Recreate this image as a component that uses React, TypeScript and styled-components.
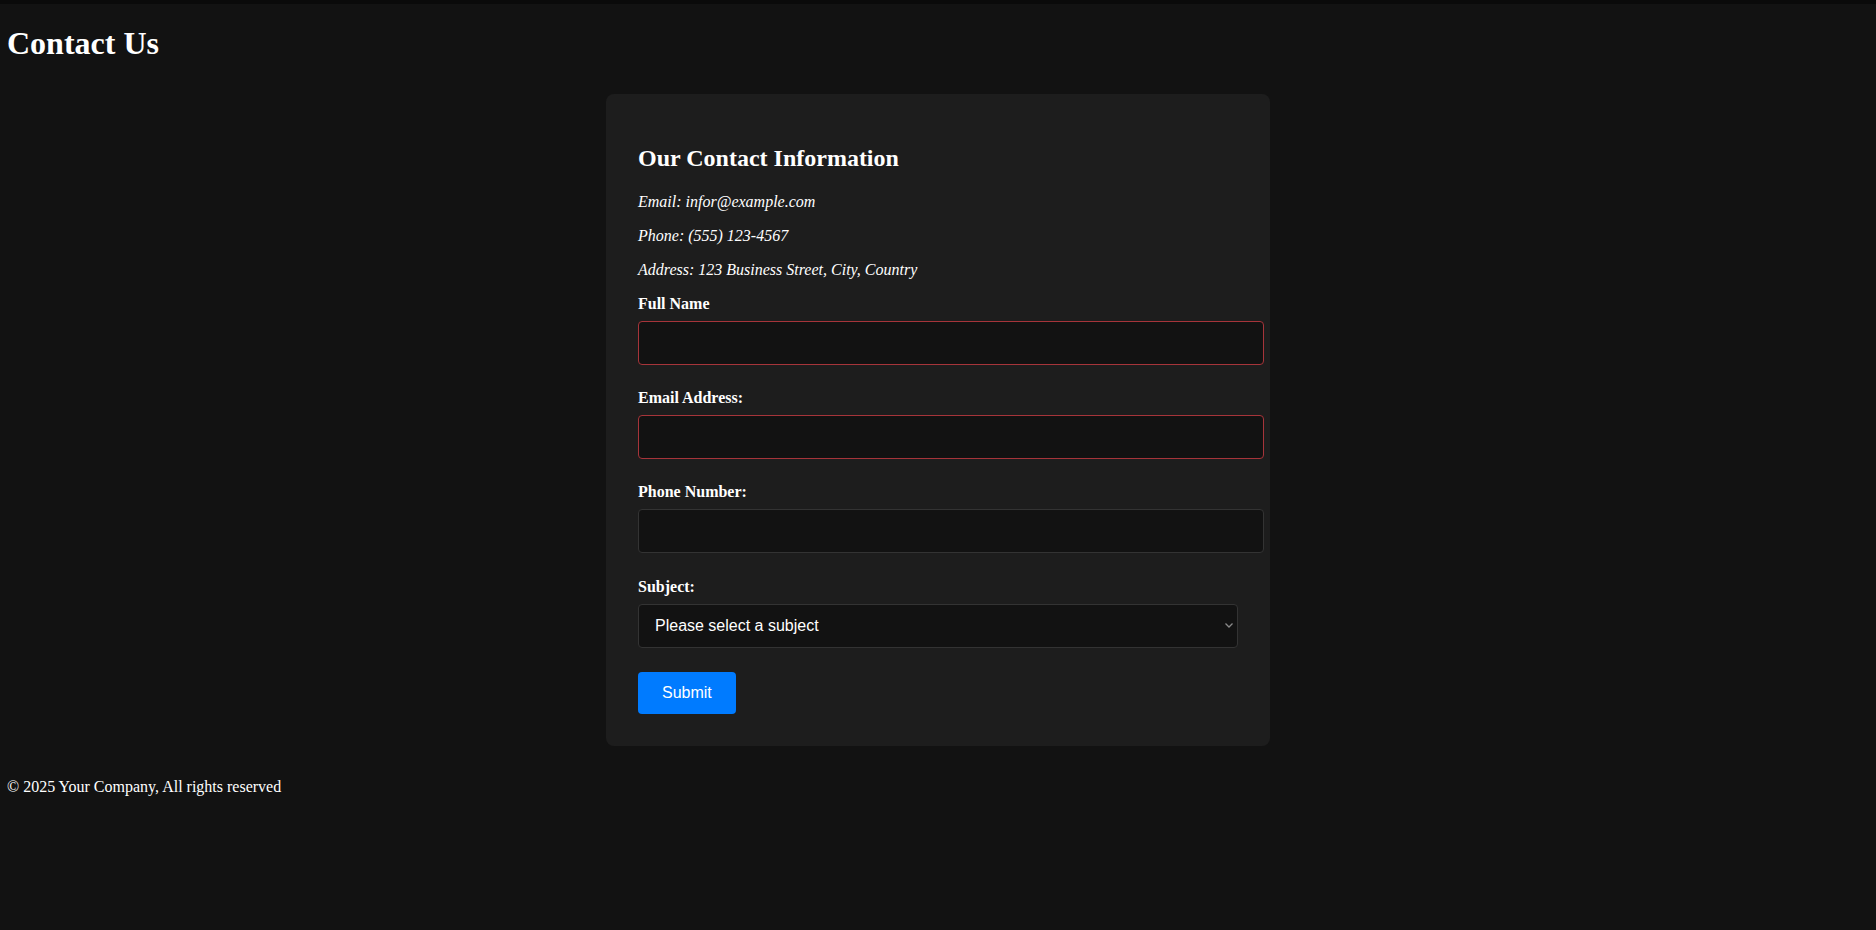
import React from "react";
import styled, { createGlobalStyle } from "styled-components";

const GlobalStyle = createGlobalStyle`
  html, body {
    margin: 0;
    padding: 0;
    background: #121212;
    color: #ffffff;
    font-family: "Liberation Serif", "Times New Roman", serif;
    font-size: 16px;
  }
`;

const Page = styled.div`
  min-height: 930px;
  background: #121212;
`;

const TopStrip = styled.div`
  height: 4px;
  background: #0a0a0a;
`;

const Main = styled.main`
  padding: 0 7px;
`;

const Title = styled.h1`
  margin: 21px 0 32px;
  font-size: 32px;
  font-weight: bold;
  line-height: normal;
`;

const Card = styled.section`
  max-width: 600px;
  margin: 0 auto;
  padding: 32px;
  background: #1d1d1d;
  border-radius: 8px;
`;

const CardTitle = styled.h2`
  margin: 19px 0 21px;
  font-size: 24px;
  font-weight: bold;
  line-height: normal;
`;

const InfoLine = styled.p`
  margin: 0 0 16px;
  font-style: italic;
  line-height: normal;
`;

const Group = styled.div<{ $last?: boolean }>`
  margin-bottom: ${(p) => (p.$last ? "24.2px" : "24.2px")};
`;

const Label = styled.label`
  display: block;
  margin-bottom: 8px;
  font-weight: bold;
  line-height: normal;
`;

const Input = styled.input<{ $invalid?: boolean }>`
  display: block;
  box-sizing: content-box;
  width: 100%;
  height: 18px;
  padding: 12px;
  margin: 0;
  background: #121212;
  color: #ffffff;
  border: 1px solid ${(p) => (p.$invalid ? "#a6343a" : "#333333")};
  border-radius: 4px;
  font-family: "Liberation Sans", Arial, sans-serif;
  font-size: 16px;
  outline: none;
`;

const SelectWrap = styled.div`
  position: relative;
  width: 100%;
`;

const Select = styled.select`
  display: block;
  box-sizing: border-box;
  width: 100%;
  height: 44px;
  padding: 0 24px 0 16px;
  margin: 0;
  appearance: none;
  -webkit-appearance: none;
  background: #121212;
  color: #ffffff;
  border: 1px solid #333333;
  border-radius: 4px;
  font-family: "Liberation Sans", Arial, sans-serif;
  font-size: 16px;
  outline: none;
`;

const Chevron = styled.svg`
  position: absolute;
  right: 5px;
  top: 50%;
  margin-top: -3px;
  width: 8px;
  height: 5px;
  pointer-events: none;
`;

const SubmitButton = styled.button`
  display: block;
  padding: 12px 24px;
  margin: 0;
  background: #007bff;
  color: #ffffff;
  border: none;
  border-radius: 4px;
  font-family: "Liberation Sans", Arial, sans-serif;
  font-size: 16px;
  line-height: normal;
  cursor: pointer;
`;

const Footer = styled.footer`
  margin-top: 32px;
  padding: 0 7px;
  line-height: normal;
`;

export default function App() {
  return (
    <Page>
      <GlobalStyle />
      <TopStrip />
      <Main>
        <Title>Contact Us</Title>
        <Card>
          <CardTitle>Our Contact Information</CardTitle>
          <InfoLine>Email: infor@example.com</InfoLine>
          <InfoLine>Phone: (555) 123-4567</InfoLine>
          <InfoLine>Address: 123 Business Street, City, Country</InfoLine>
          <form onSubmit={(e) => e.preventDefault()}>
            <Group>
              <Label htmlFor="name">Full Name</Label>
              <Input id="name" type="text" $invalid />
            </Group>
            <Group>
              <Label htmlFor="email">Email Address:</Label>
              <Input id="email" type="email" $invalid />
            </Group>
            <Group>
              <Label htmlFor="phone">Phone Number:</Label>
              <Input id="phone" type="tel" />
            </Group>
            <Group $last>
              <Label htmlFor="subject">Subject:</Label>
              <SelectWrap>
                <Select id="subject" defaultValue="">
                  <option value="">Please select a subject</option>
                  <option value="general">General Inquiry</option>
                  <option value="support">Support</option>
                  <option value="sales">Sales</option>
                </Select>
                <Chevron viewBox="0 0 8 5" aria-hidden="true">
                  <path d="M0.5 0.5 L4 4 L7.5 0.5" fill="none" stroke="#8a8a8a" strokeWidth="1.3" />
                </Chevron>
              </SelectWrap>
            </Group>
            <SubmitButton type="submit">Submit</SubmitButton>
          </form>
        </Card>
      </Main>
      <Footer>© 2025 Your Company, All rights reserved</Footer>
    </Page>
  );
}
